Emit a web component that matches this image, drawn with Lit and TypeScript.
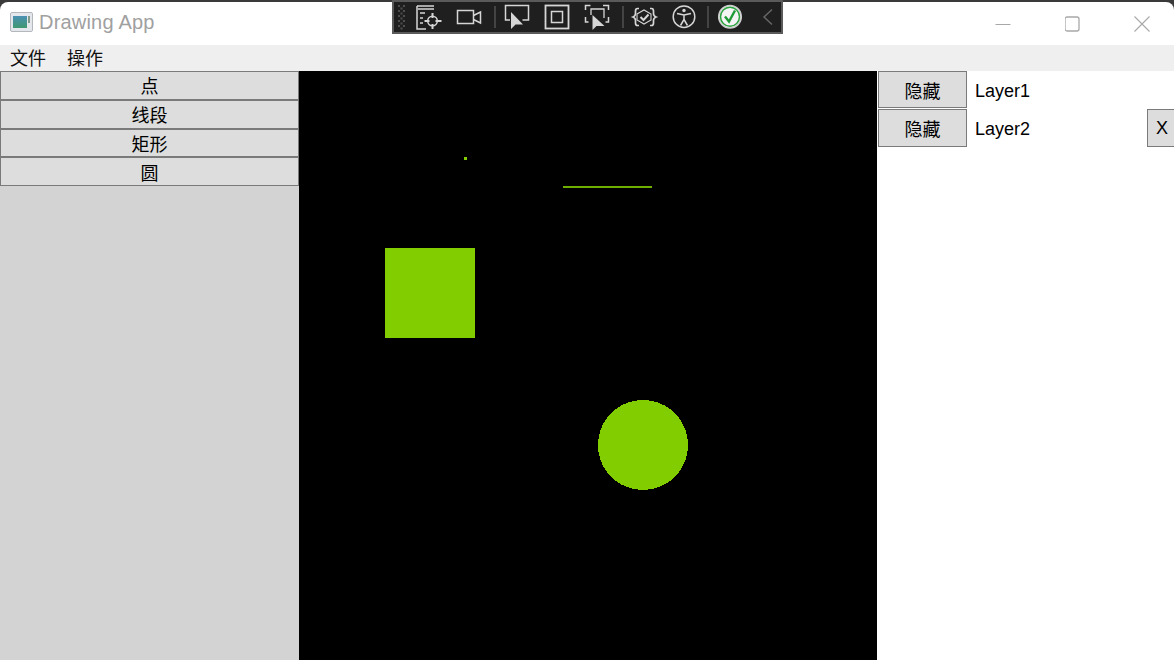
import { LitElement, html, css, svg } from "lit";
import { customElement } from "lit/decorators.js";

const tools = ["点", "线段", "矩形", "圆"];

@customElement("debug-toolbar")
class DebugToolbar extends LitElement {
  static styles = css`
    :host {
      position: absolute;
      left: 392px;
      top: 0;
      width: 391px;
      height: 34px;
      box-sizing: border-box;
      background: #1f1f1f;
      border: 2px solid #5a5a5a;
      display: block;
    }
    svg {
      display: block;
    }
  `;

  render() {
    // drawn in page coordinates, the group moves them into the bar
    return html`
      <svg width="387" height="30" viewBox="0 0 387 30" fill="none" stroke="#d6d6d6" stroke-width="1.5">
        <g transform="translate(-394 -2)">
          <g fill="#4f4f4f" stroke="none">
            ${[5, 10, 15, 20, 25].map(
              (y) => svg`<rect x="398" y=${y} width="2" height="2" /><rect x="403" y=${y} width="2" height="2" /><rect x="400.500" y=${y + 2.5} width="2" height="2" />`
            )}
          </g>

          <!-- live visual tree -->
          <path d="M417 6h17M417 6v23h9M418 9h16" />
          <path d="M420 13h5M420 18h3M420 23h3" />
          <circle cx="432.500" cy="21" r="4.800" />
          <path d="M432.500 13v5M432.500 24v5M424.500 21h5M435.500 21h6" stroke-width="2" />

          <!-- camera -->
          <rect x="457.500" y="10.500" width="16" height="13" />
          <path d="M473.500 15.500l7-3.500v11l-7-3.500" />
          <path d="M495 6v22" stroke="#444" stroke-width="2" />

          <!-- select element -->
          <path d="M510 20h-4.500v-14.500h23v14.500h-6" />
          <path d="M511 12v17l4.500-4.500h7.500z" fill="#d6d6d6" stroke="none" />

          <!-- adorners -->
          <rect x="545.500" y="5.500" width="23" height="23" stroke-width="1.800" />
          <rect x="551.500" y="11.500" width="11" height="11" />

          <!-- track focus -->
          <path d="M585.500 10v-4.500h5M603 5.500h5.500v4.500M585.500 17v5h3M608.500 17v5h-3" />
          <path d="M591 15v-6h13v9" stroke-width="1.300" />
          <path d="M592.500 15v15l4-4h8z" fill="#d6d6d6" stroke="none" />
          <path d="M623 6v22" stroke="#444" stroke-width="2" />

          <!-- binding check -->
          <path d="M639 8.500h-1.500q-2 0-2 2.500v2.500q0 2.500-2.500 3.500q2.500 1 2.500 3.500v2.500q0 2.500 2 2.500h1.500M650 8.500h1.500q2 0 2 2.500v2.500q0 2.500 2.500 3.500q-2.500 1-2.500 3.500v2.500q0 2.500-2 2.500h-1.500" stroke-width="1.700" />
          <path d="M637 14l7-4 7 4v6l-7 4-7-4z" stroke-width="1.100" />
          <path d="M640.500 17l3 3 5-5.500" stroke-width="2" />

          <!-- accessibility -->
          <circle cx="684" cy="16.700" r="10.800" />
          <circle cx="684" cy="10.500" r="1.700" fill="#d6d6d6" stroke="none" />
          <path d="M677 13.500l7 1.500 7-1.500M684 15v4.500M684 19.500l-3.500 6M684 19.500l3.500 6" />
          <path d="M708 6v22" stroke="#444" stroke-width="2" />

          <!-- status -->
          <circle cx="730" cy="16.700" r="11.300" fill="#f4f4f4" stroke="#ccc" />
          <circle cx="730" cy="16.700" r="9.500" stroke="#2aa13e" stroke-width="1.500" />
          <path d="M725 16.500l4 5 6-11" stroke="#1f9a35" stroke-width="2.400" />

          <path d="M772 9.500l-8 7.500 8 7.500" stroke="#666" stroke-width="1.500" />
        </g>
      </svg>
    `;
  }
}

@customElement("app-root")
class AppRoot extends LitElement {
  static styles = css`
    :host {
      display: block;
      position: relative;
      width: 1174px;
      height: 660px;
      overflow: hidden;
      background: #3a3a3a;
      font-family: "Liberation Sans", "Noto Sans CJK SC", sans-serif;
      font-size: 18px;
      color: #000;
    }
    .window {
      position: absolute;
      inset: 2px 0 0 0;
      display: flex;
      flex-direction: column;
      background: #fff;
      border-radius: 8px 8px 0 0;
      overflow: hidden;
    }
    .titlebar {
      height: 43px;
      flex: none;
      display: flex;
      align-items: center;
      padding-left: 10px;
      color: #a0a0a0;
      font-size: 20px;
      letter-spacing: 0.2px;
    }
    .app-icon {
      margin-right: 6px;
      display: block;
      align-self: flex-start;
      margin-top: 10px;
    }
    .title {
      flex: 1;
      margin-top: -2px;
    }
    .win-btn {
      width: 69.500px;
      height: 43px;
      display: flex;
      align-items: center;
      justify-content: center;
    }
    .win-btn:last-child {
      margin-right: -3px;
    }
    .menu {
      height: 26px;
      flex: none;
      display: flex;
      background: #efefef;
      font-size: 18px;
      line-height: 28px;
      padding-left: 10px;
      gap: 21px;
      color: #111;
    }
    .main {
      flex: 1;
      display: flex;
      min-height: 0;
    }
    .tools {
      width: 299px;
      flex: none;
      background: #d3d3d3;
      display: flex;
      flex-direction: column;
    }
    button {
      font: inherit;
      font-size: 18px;
      color: #000;
      background: #dddddd;
      border: 1px solid #7a7a7a;
      padding: 0;
      margin: 0;
      box-sizing: border-box;
    }
    .tools button {
      height: 28.750px;
      width: 299px;
    }
    .canvas {
      width: 578px;
      flex: none;
      background: #000;
    }
    .canvas svg {
      display: block;
    }
    .layers {
      flex: 1;
      display: flex;
      flex-direction: column;
      padding-left: 1px;
      gap: 1px;
    }
    .layer {
      display: flex;
      align-items: center;
      height: 37px;
    }
    .layer:nth-child(2) {
      height: 38px;
    }
    .hide {
      width: 89px;
      height: 100%;
      flex: none;
    }
    .name {
      flex: 1;
      padding: 3px 0 0 8px;
    }
    .close {
      width: 27px;
      height: 100%;
      flex: none;
      border-right: 0;
      padding-left: 2px;
    }
  `;

  render() {
    return html`
      <div class="window">
        <div class="titlebar">
          <svg class="app-icon" width="23" height="20" viewBox="0 0 23 20">
            <rect x="0.500" y="0.500" width="22" height="19" rx="1.500" fill="#e4e8ec" stroke="#b4b8bc" />
            <defs>
              <linearGradient id="g" x1="0" y1="0" x2="0" y2="1">
                <stop offset="0" stop-color="#4a90b4" />
                <stop offset="1" stop-color="#3f9a70" />
              </linearGradient>
            </defs>
            <rect x="3" y="4" width="14" height="12" fill="url(#g)" />
            <rect x="18" y="4" width="2" height="7" fill="#7f9a8a" />
          </svg>
          <span class="title">Drawing App</span>
          <div class="win-btn">
            <svg width="16" height="16" viewBox="0 0 16 16"><path d="M0.500 8.500h15" stroke="#a8a8a8" fill="none" /></svg>
          </div>
          <div class="win-btn">
            <svg width="16" height="16" viewBox="0 0 16 16"><rect x="0" y="1" width="14" height="14" rx="2" fill="none" stroke="#a8a8a8" stroke-width="1.300" /></svg>
          </div>
          <div class="win-btn">
            <svg width="16" height="16" viewBox="0 0 16 16"><path d="M0.500 0.500l15 15M15.500 0.500l-15 15" stroke="#a8a8a8" stroke-width="1.100" fill="none" /></svg>
          </div>
        </div>
        <div class="menu"><span>文件</span><span>操作</span></div>
        <div class="main">
          <div class="tools">
            ${tools.map((t) => html`<button>${t}</button>`)}
          </div>
          <div class="canvas">
            <svg width="578" height="589" viewBox="299 71 578 589" shape-rendering="crispEdges">
              <rect x="464" y="157" width="3" height="3" fill="#82cd00" />
              <rect x="563" y="186" width="89" height="2" fill="#6fae00" />
              <rect x="385" y="248" width="90" height="90" fill="#82cd00" />
              <circle cx="643" cy="445" r="45" fill="#82cd00" />
            </svg>
          </div>
          <div class="layers">
            <div class="layer">
              <button class="hide">隐藏</button>
              <span class="name">Layer1</span>
            </div>
            <div class="layer">
              <button class="hide">隐藏</button>
              <span class="name">Layer2</span>
              <button class="close">X</button>
            </div>
          </div>
        </div>
      </div>
      <debug-toolbar></debug-toolbar>
    `;
  }
}
